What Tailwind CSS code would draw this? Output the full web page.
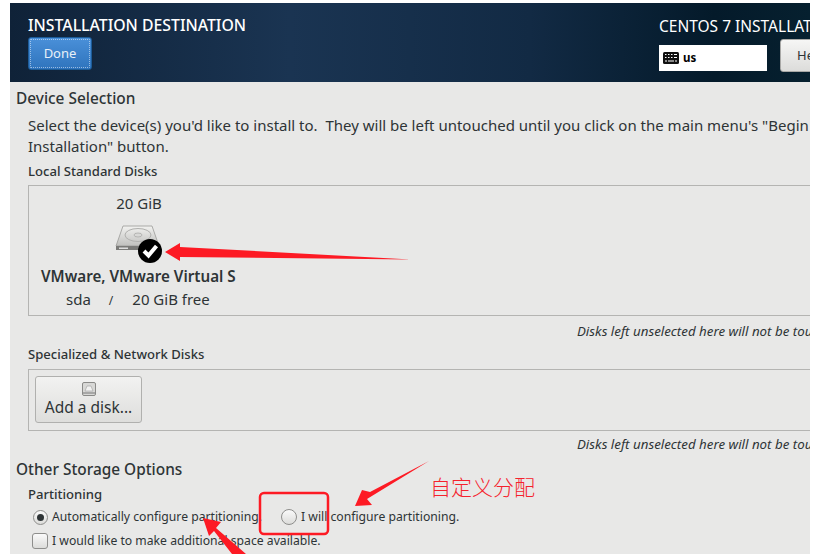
<!DOCTYPE html>
<html lang="en">
<head>
  <meta charset="UTF-8">
  <title>Installation Destination</title>
  <script src="https://cdn.jsdelivr.net/npm/@tailwindcss/browser@4"></script>
</head>
<body class="bg-white w-[814px] h-[554px] overflow-hidden relative font-['Noto_Sans',sans-serif] text-[#2e3436]">
  <div class="ml-[10px] mt-[3px] w-[800px] h-[551px] bg-[#e8e8e7] overflow-hidden">

    <!-- Header -->
    <header class="h-[79px] flex justify-between bg-[linear-gradient(90deg,#0f2238_0%,#1a3452_35%,#122a44_65%,#041a2a_88%,#06202f_100%)] text-white">
      <div class="pl-[18px] pt-[12px]">
        <h1 class="text-[15.8px] leading-[20px] font-medium whitespace-nowrap">INSTALLATION DESTINATION</h1>
        <button class="mt-[2px] w-[64px] h-[33px] rounded-[3px] border border-[#1c5b97] bg-[linear-gradient(#4a90d9,#2f74bd)] text-[13px] text-[#e8f0f8] outline-1 outline-dotted -outline-offset-3 outline-white/50">Done</button>
      </div>
      <div class="w-[151px] shrink-0 pt-[13px] overflow-hidden">
        <div class="text-[15.5px] leading-[20px] whitespace-nowrap">CENTOS 7 INSTALLATION</div>
        <div class="flex items-start gap-[13px] mt-[2px]">
          <div class="w-[108px] h-[26px] mt-[7px] bg-white text-black flex items-center pl-[4px] gap-[4px] shrink-0">
            <svg width="16" height="12" viewBox="0 0 16 12"><rect width="16" height="12" rx="1.500" fill="#111"/><path d="M2 2.500h1.500M5 2.500h1.500M8 2.500h1.500M11 2.500h3M2 5.500h1.500M5 5.500h1.500M8 5.500h1.500M11 5.500h3M2 9h2M5 9h6M12 9h2" stroke="#fff" stroke-width="1.200"/></svg>
            <span class="text-[11.500px] font-bold leading-none">us</span>
          </div>
          <button class="w-[60px] h-[33px] shrink-0 rounded-[3px] border border-[#a8a8a6] bg-[linear-gradient(#f6f6f5,#dcdcda)] text-[13px] text-[#2e3436] text-left pl-[16px] mt-[1px]">Help!</button>
        </div>
      </div>
    </header>

    <!-- Device selection -->
    <section class="pl-[6px]">
      <h2 class="text-[15.4px] leading-[20px] font-medium mt-[7px]">Device Selection</h2>
      <div class="pl-[12px]">
        <p class="text-[15px] leading-[21px] mt-[6px] w-[790px] whitespace-nowrap">Select the device(s) you'd like to install to.&nbsp; They will be left untouched until you click on the main menu's "Begin<br>Installation" button.</p>
        <h3 class="text-[13.1px] leading-[18px] font-medium mt-[5px]">Local Standard Disks</h3>
        <div class="mt-[5px] h-[131px] w-[800px] border border-[#b4b4b2]">
          <div class="w-[220px] pl-[12px] flex flex-col">
            <div class="w-[196px] text-center text-[15px] leading-[20px] mt-[7px]">20 GiB</div>
            <div class="w-[196px] flex justify-center mt-[12px] h-[37px]">
              <svg width="60" height="40" viewBox="0 0 60 40" class="ml-[10px] shrink-0">
                <defs><linearGradient id="hd" x1="0" y1="0" x2="0" y2="1"><stop offset="0" stop-color="#f2f2f0"/><stop offset="1" stop-color="#c0c0be"/></linearGradient></defs>
                <path d="M9 1h29l7 20H2z" fill="url(#hd)" stroke="#9a9a98" stroke-width=".8"/>
                <ellipse cx="24" cy="10" rx="13" ry="6.500" fill="none" stroke="#b0b0ae"/>
                <ellipse cx="24" cy="10" rx="4" ry="2" fill="#d8d8d6" stroke="#a5a5a3" stroke-width=".7"/>
                <path d="M2 21h43v4H2z" fill="#7a7a78"/>
                <path d="M5 22.500h9v1.500H5z" fill="#ddd"/>
                <circle cx="36" cy="26" r="12" fill="#000"/>
                <path d="M30 26l4.500 4.500L42.500 21" fill="none" stroke="#fff" stroke-width="4"/>
              </svg>
            </div>
            <div class="text-[15.2px] leading-[20px] font-semibold whitespace-nowrap mt-[4px]">VMware, VMware Virtual S</div>
            <div class="flex items-baseline text-[15px] leading-[20px] mt-[3px] pl-[25px] whitespace-nowrap">
              <span>sda</span><span class="ml-[18px] text-[12px]">/</span><span class="ml-[19px]">20 GiB free</span>
            </div>
          </div>
        </div>
        <div class="w-[782px] overflow-hidden">
          <p class="text-[13.3px] leading-[16px] italic mt-[7px] ml-[549px] whitespace-nowrap">Disks left unselected here will not be touched.</p>
        </div>
        <h3 class="text-[13.1px] leading-[18px] font-medium mt-[6px]">Specialized &amp; Network Disks</h3>
        <div class="mt-[6px] h-[62px] w-[800px] border border-[#b4b4b2] pl-[6px] pt-[6px]">
          <button class="w-[107px] h-[47px] rounded-[3px] border border-[#b0b0ae] bg-[linear-gradient(#f2f2f1,#dededc)] flex flex-col items-center">
            <svg width="14" height="14" viewBox="0 0 14 14" class="mt-[5px]"><rect x=".5" y=".5" width="13" height="13" rx="1.500" fill="#d8d8d6" stroke="#8a8a88"/><path d="M3 9l2-5h4l2 5z" fill="#f2f2f1" stroke="#a8a8a6" stroke-width=".7"/><path d="M1 11h12" stroke="#777"/></svg>
            <span class="text-[15.5px] leading-[20px] mt-[1px] whitespace-nowrap">Add a disk...</span>
          </button>
        </div>
        <div class="w-[782px] overflow-hidden">
          <p class="text-[13.3px] leading-[16px] italic mt-[5px] ml-[549px] whitespace-nowrap">Disks left unselected here will not be touched.</p>
        </div>
      </div>
    </section>

    <!-- Other storage options -->
    <section class="pl-[6px]">
      <h2 class="text-[15.4px] leading-[20px] font-medium mt-[8px]">Other Storage Options</h2>
      <div class="pl-[12px]">
        <h3 class="text-[13.1px] leading-[18px] font-medium mt-[5px]">Partitioning</h3>
        <div class="flex items-center mt-[4px] h-[20px] text-[12.2px] whitespace-nowrap pl-[5px]">
          <span class="w-[15px] h-[15px] rounded-full border border-[#8e8e8c] bg-[linear-gradient(#fafafa,#dcdcda)] flex items-center justify-center shrink-0"><span class="w-[7px] h-[7px] rounded-full bg-[#2e3436]"></span></span>
          <span class="ml-[4px] w-[229px]">Automatically configure partitioning.</span>
          <span class="w-[16px] h-[16px] rounded-full border border-[#8e8e8c] bg-[linear-gradient(#fafafa,#dcdcda)] shrink-0"></span>
          <span class="ml-[4px]">I will configure partitioning.</span>
        </div>
        <div class="flex items-center mt-[4px] h-[20px] text-[12.2px] whitespace-nowrap pl-[4px]">
          <span class="w-[16px] h-[16px] rounded-[3px] border border-[#8e8e8c] bg-[linear-gradient(#fafafa,#dcdcda)] shrink-0"></span>
          <span class="ml-[4px]">I would like to make additional space available.</span>
        </div>
      </div>
    </section>
  </div>

  <!-- Annotations drawn over the screenshot -->
  <svg class="absolute left-0 top-0 pointer-events-none" width="814" height="554" viewBox="0 0 814 554">
    <path d="M411 259.500L180 247V243L165 252 180 261V257z" fill="#fd1a24"/>
    <path d="M429 461L370 492 362 490 355 506 372 505 367 499z" fill="#fd1a24"/>
    <path d="M203 518L221 522 216 528 246 554H232L214 531 209 536z" fill="#fd1a24"/>
    <rect x="260" y="493" width="68" height="41" rx="4" fill="none" stroke="#fd1a24" stroke-width="2.500"/>
  </svg>
  <div class="absolute left-[430px] top-[473px] text-[21px] leading-[26px] text-[#f5222d] font-['Noto_Sans_CJK_SC',sans-serif] font-light whitespace-nowrap">自定义分配</div>
</body>
</html>
